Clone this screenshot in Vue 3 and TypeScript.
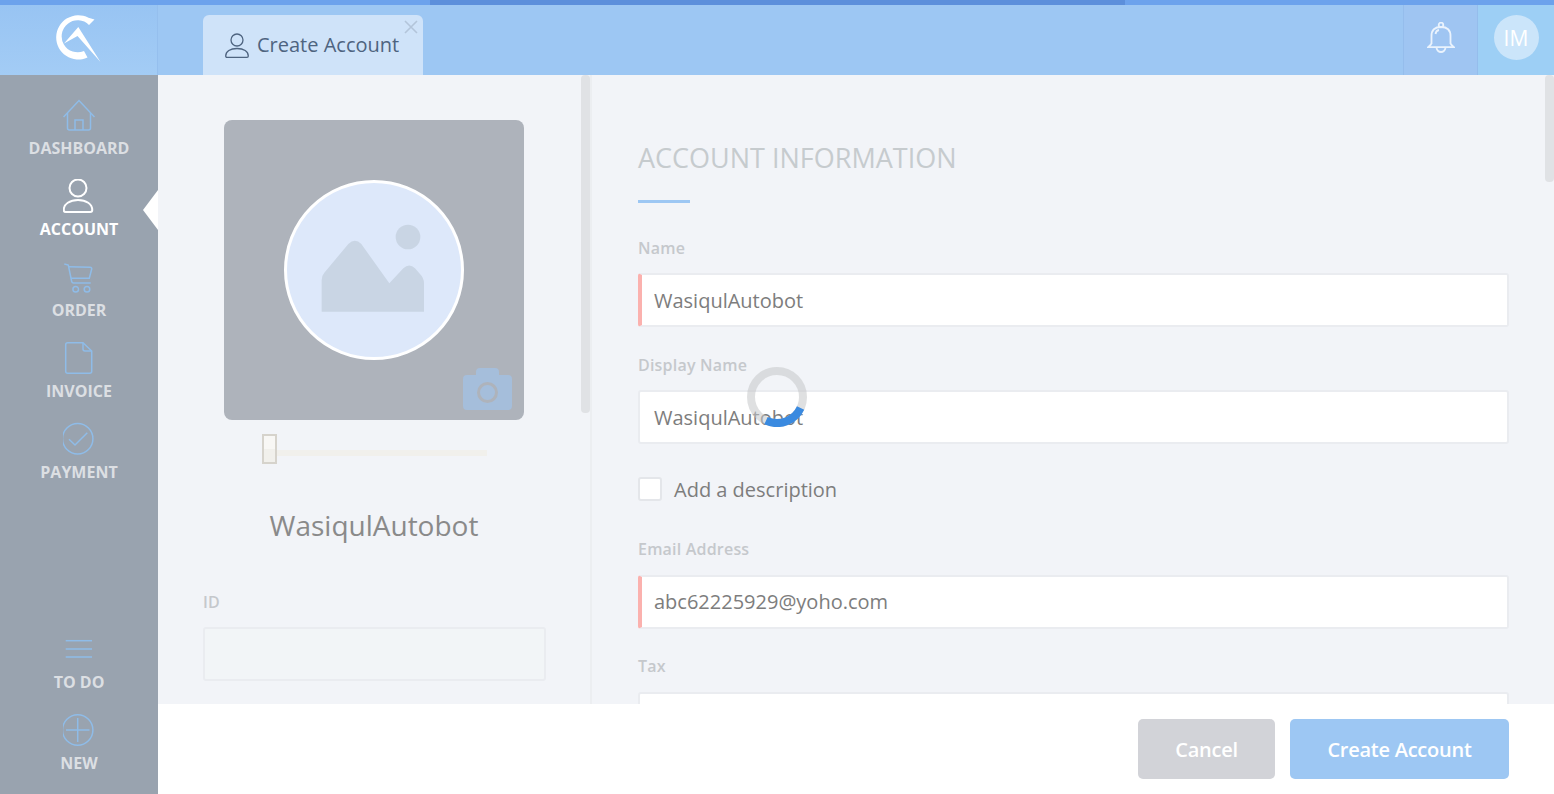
<script setup lang="ts">
interface NavItem {
  label: string
  paths: string[]
  active?: boolean
}

const ring = (cx: number, cy: number, r: number) =>
  `M${cx - r} ${cy}a${r} ${r} 0 1 0 ${r * 2} 0a${r} ${r} 0 1 0 ${-r * 2} 0Z`

const mainNav: NavItem[] = [
  {
    label: 'DASHBOARD',
    paths: [
      'M.5 19 16 2.5 31.5 19',
      'M4.5 15V30q0 2 2 2H25.5q2 0 2-2V15',
      'M12 32V22H20V32',
    ],
  },
  {
    label: 'ACCOUNT',
    active: true,
    paths: [
      ring(15, 9, 8.5),
      'M.75 31c0-6 6-10 14.25-10s14.25 4 14.25 10q0 2-2 2H2.75q-2 0-2-2Z',
    ],
  },
  {
    label: 'ORDER',
    paths: [
      'M1.3 4 5.3 5 8.7 21.5Q9 23 10.5 23H27.7',
      'M6 6.7 27 7.3Q28.9 7.4 28.7 9L26.3 18.3H8',
      ring(12.7, 29.3, 2.8),
      ring(24, 29.3, 2.8),
    ],
  },
  {
    label: 'INVOICE',
    paths: [
      'M4.7 1.7H20L28.7 10V30.3q0 2-2 2H4.7q-2 0-2-2V3.7q0-2 2-2Z',
      'M20 2V8q0 2 2 2H28.7',
    ],
  },
  {
    label: 'PAYMENT',
    paths: [ring(14.7, 16.7, 15.2), 'M6 17.3 12 23 24.3 10.7'],
  },
]

const bottomNav: NavItem[] = [
  {
    label: 'TO DO',
    paths: ['M2.7 8.7H29', 'M2.7 17H29', 'M2.7 25H29'],
  },
  {
    label: 'NEW',
    paths: [ring(14.7, 17, 15.2), 'M3 17H26.5', 'M14.7 5V29'],
  },
]
</script>

<template>
  <div class="app">
    <div class="progress">
      <span class="seg seg-a"></span>
      <span class="seg seg-b"></span>
      <span class="seg seg-c"></span>
    </div>

    <header class="topbar">
      <div class="logo">
        <svg width="46" height="50" viewBox="56 13 46 50" fill="#fff">
          <path d="M94.500 18.500 89 24A16 16 0 1 0 84 50L87.500 56.500A22.100 22.100 0 1 1 88.500 16.800Z" />
          <path d="M78.300 26 100.500 61 77.500 35 64 42.500Z" />
        </svg>
      </div>
      <div class="tab">
        <svg class="tab-icon" width="24" height="25" viewBox="0 0 24 25" fill="none" stroke="#4e6480" stroke-width="1.300">
          <circle cx="12" cy="7" r="6" />
          <path d="M.7 23c0-4.500 4.500-7.500 11.300-7.500s11.300 3 11.300 7.500q0 1.300-1.300 1.300H2q-1.300 0-1.300-1.300Z" />
        </svg>
        <span class="tab-title">Create Account</span>
        <svg class="tab-close" width="14" height="14" viewBox="0 0 14 14" stroke="#b3c5da" stroke-width="1.600">
          <path d="M1 1 13 13M13 1 1 13" />
        </svg>
      </div>
      <div class="top-actions">
        <div class="bell">
          <svg width="28" height="31" viewBox="0 0 28 31" fill="none" stroke="#eaf3fd" stroke-width="1.800">
            <circle cx="14" cy="3" r="2.300" />
            <path d="M4.500 22V14Q4.500 5 14 5T23.500 14V22" />
            <path d="M8.500 12Q9 8.500 12 8" />
            <path d="M4.500 22 1 25.200H27L23.500 22" />
            <path d="M9.500 26Q10.500 30 14 30T18.500 26" />
          </svg>
        </div>
        <div class="profile"><span class="avatar">IM</span></div>
      </div>
    </header>

    <div class="body">
      <nav class="sidebar">
        <div class="nav-group">
          <a v-for="item in mainNav" :key="item.label" class="nav-item" :class="{ active: item.active }">
            <svg width="32" height="36" viewBox="0 0 32 36" fill="none">
              <path v-for="d in item.paths" :key="d" :d="d" />
            </svg>
            <span>{{ item.label }}</span>
          </a>
        </div>
        <div class="nav-group">
          <a v-for="item in bottomNav" :key="item.label" class="nav-item">
            <svg width="32" height="36" viewBox="0 0 32 36" fill="none">
              <path v-for="d in item.paths" :key="d" :d="d" />
            </svg>
            <span>{{ item.label }}</span>
          </a>
        </div>
      </nav>

      <main class="content">
        <div class="panels">
          <section class="side-panel">
            <div class="photo">
              <div class="photo-circle">
                <svg viewBox="201 219 522 522">
                  <circle cx="564" cy="381" r="37" fill="#c9d5e4" />
                  <path
                    fill="#c9d5e4"
                    d="M305 605V510Q305 497 313 488L385 402Q405 382 424 402L508 520 550 475Q568 458 585 475L600 492Q612 504 612 520V605Z"
                  />
                </svg>
              </div>
              <svg class="camera" width="49" height="42" viewBox="0 0 49 42">
                <path
                  fill="#a5bedb"
                  d="M4 7H13V4Q13 0 17 0H32Q36 0 36 4V7H45Q49 7 49 11V38Q49 42 45 42H4Q0 42 0 38V11Q0 7 4 7Z"
                />
                <circle cx="24.500" cy="24.500" r="9" fill="none" stroke="#aeb3bb" stroke-width="3" />
              </svg>
            </div>
            <div class="zoom-slider">
              <span class="zoom-handle"></span>
              <span class="zoom-track"></span>
            </div>
            <h2 class="profile-name">WasiqulAutobot</h2>
            <label class="field-label id-label">ID</label>
            <div class="input input-disabled"></div>
            <div class="panel-scroll"></div>
          </section>

          <section class="form-panel">
            <h1 class="section-title">ACCOUNT INFORMATION</h1>
            <div class="title-rule"></div>
            <label class="field-label">Name</label>
            <div class="input required">WasiqulAutobot</div>
            <label class="field-label">Display Name</label>
            <div class="input">WasiqulAutobot</div>
            <div class="check-row">
              <span class="checkbox"></span>
              <span>Add a description</span>
            </div>
            <label class="field-label">Email Address</label>
            <div class="input required low">abc62225929@yoho.com</div>
            <label class="field-label tax-label">Tax</label>
            <div class="input low"></div>
            <div class="form-scroll"></div>
          </section>
        </div>

        <footer class="actions">
          <button class="btn btn-cancel">Cancel</button>
          <button class="btn btn-create">Create Account</button>
        </footer>
      </main>
    </div>

    <!-- loading spinner over the page -->
    <svg class="spinner" width="60" height="60" viewBox="0 0 60 60" fill="none" stroke-width="8">
      <circle cx="30" cy="30" r="26" stroke="#c4c6c9" stroke-opacity="0.55" />
      <path d="M53.600 41A26 26 0 0 1 19 53.600" stroke="#3a8ae0" />
    </svg>
  </div>
</template>

<style>
html,
body {
  margin: 0;
  background: #fff;
}
</style>

<style scoped>
.app {
  position: relative;
  display: flex;
  flex-direction: column;
  height: 794px;
  overflow: hidden;
  font-family: "Open Sans", "Noto Sans", sans-serif;
  color: #7d7d7d;
}

.progress { display: flex; height: 5px; flex-shrink: 0; }
.seg { display: block; }
.seg-a { width: 430px; background: #6ca2ec; }
.seg-b { width: 695px; background: #5c8fdb; }
.seg-c { flex: 1; background: #6ca2ec; }

.topbar { display: flex; height: 70px; flex-shrink: 0; background: #9dc7f3; }
.logo { width: 157px; display: flex; justify-content: center; align-items: center; border-right: 1px solid #95bfee; background: linear-gradient(#98c4f3, #a3ccf5); }
.logo svg { margin-top: -2px; }
.tab { position: relative; display: flex; align-items: center; gap: 8px; width: 220px; box-sizing: border-box; margin: 10px 0 0 45px; padding-left: 22px; background: #cfe3f9; border-radius: 6px 6px 0 0; color: #4e6480; font-size: 20px; }
.tab-title { margin-top: -2px; }
.tab-close { position: absolute; top: 5px; right: 5px; }
.top-actions { display: flex; margin-left: auto; }
.bell { width: 75px; display: flex; align-items: center; justify-content: center; padding-bottom: 5px; background: #9fc5f2; border-left: 1px solid #95bdec; border-right: 1px solid #95bdec; box-sizing: border-box; }
.profile { width: 76px; display: flex; align-items: center; justify-content: center; padding-bottom: 5px; box-sizing: border-box; background: #9dcff5; }
.avatar { width: 45px; height: 45px; border-radius: 50%; background: #cbe5fa; color: #fff; font-size: 21px; display: flex; align-items: center; justify-content: center; }

.body { flex: 1; display: flex; min-height: 0; }

.sidebar { width: 158px; flex-shrink: 0; box-sizing: border-box; display: flex; flex-direction: column; justify-content: space-between; padding: 19px 0 4px; background: #99a3af; }
.nav-item { position: relative; display: flex; flex-direction: column; align-items: center; height: 81px; box-sizing: border-box; padding-top: 4px; color: #dcdfe3; font-size: 16px; font-weight: 700; }
.nav-item svg { stroke: #8fbce8; stroke-width: 1.500; display: block; }
.nav-item span { margin-top: 3px; line-height: 22px; }
.nav-item.active { color: #fff; }
.nav-item.active svg { stroke: #fff; stroke-width: 2; }
.nav-item.active::after { content: ""; position: absolute; right: 0; top: 15px; border-style: solid; border-width: 20.500px 15px 20.500px 0; border-color: transparent #fff transparent transparent; }

.content { flex: 1; display: flex; flex-direction: column; min-width: 0; }
.panels { flex: 1; display: flex; min-height: 0; background: #f2f4f8; }

.side-panel { position: relative; width: 434px; flex-shrink: 0; box-sizing: border-box; padding: 45px 45px 0; border-right: 2px solid #eceef1; overflow: hidden; }
.photo { position: relative; width: 300px; height: 300px; margin: 0 21px; border-radius: 8px; background: #aeb3bb; display: flex; align-items: center; justify-content: center; }
.photo-circle { width: 180px; height: 180px; box-sizing: border-box; border: 3px solid #fff; border-radius: 50%; background: #dde8fa; overflow: hidden; }
.photo-circle svg { display: block; width: 100%; height: 100%; }
.camera { position: absolute; right: 12px; bottom: 10px; }

.zoom-slider { display: flex; align-items: center; height: 30px; margin: 14px 0 0 59px; }
.zoom-handle { width: 15px; height: 30px; box-sizing: border-box; border: 2px solid #d6d3cc; background: linear-gradient(#f8f7f5 50%, #f1f0ec 50%); }
.zoom-track { width: 210px; height: 6px; margin-top: 7px; background: #f1f0ec; }

.profile-name { margin: 43px 0 0; text-align: center; font-size: 28px; line-height: 37px; font-weight: 400; color: #8a8a8a; }

.form-panel { position: relative; flex: 1; box-sizing: border-box; padding: 64px 45px 0 46px; overflow: hidden; }
.section-title { margin: 0; font-size: 27px; line-height: 37px; font-weight: 400; color: #c6cbce; }
.title-rule { width: 52px; height: 3px; margin: 24px 0 0; background: #9dc7f3; }

.field-label { display: block; margin-top: 27px; font-size: 16px; line-height: 22px; font-weight: 600; letter-spacing: 0.2px; color: #c5c8cc; }
.side-panel .id-label { margin-top: 47px; }
.form-panel .title-rule + .field-label { margin-top: 34px; }
.form-panel .tax-label { margin-top: 26px; }
.input { height: 54px; margin-top: 14px; box-sizing: border-box; padding-left: 14px; background: #fff; border: 2px solid #eaecf0; border-radius: 3px; font-size: 20px; line-height: 52px; color: #7d7d7d; }
.input.low { margin-top: 15px; line-height: 50px; }
.side-panel .input { width: 343px; margin-top: 14px; }
.input-disabled { background: #f2f5f7; }
.input.required { border-left: 4px solid #fbb1ae; padding-left: 12px; }

.check-row { display: flex; align-items: center; gap: 12px; margin-top: 33px; height: 24px; font-size: 20px; color: #7d7d7d; }
.checkbox { width: 24px; height: 24px; box-sizing: border-box; border: 2px solid #e4e6ea; border-radius: 3px; background: #fff; }
.form-panel .check-row + .field-label { margin-top: 37px; }

.panel-scroll { position: absolute; top: 0; right: 0; width: 9px; height: 338px; border-radius: 4px; background: #e0e2e5; }
.form-scroll { position: absolute; top: 0; right: 0; width: 9px; height: 107px; border-radius: 4px; background: #e0e2e5; }

.actions { display: flex; justify-content: flex-end; gap: 15px; height: 90px; flex-shrink: 0; box-sizing: border-box; padding: 15px 45px 0 0; background: #fff; }
.btn { height: 60px; border: none; border-radius: 5px; color: #fff; font-family: inherit; font-size: 20px; font-weight: 600; letter-spacing: -0.25px; }
.btn-cancel { width: 137px; background: #d2d3d8; }
.btn-create { width: 219px; background: #9dc7f3; }

.spinner { position: absolute; left: 747px; top: 367px; }
</style>
